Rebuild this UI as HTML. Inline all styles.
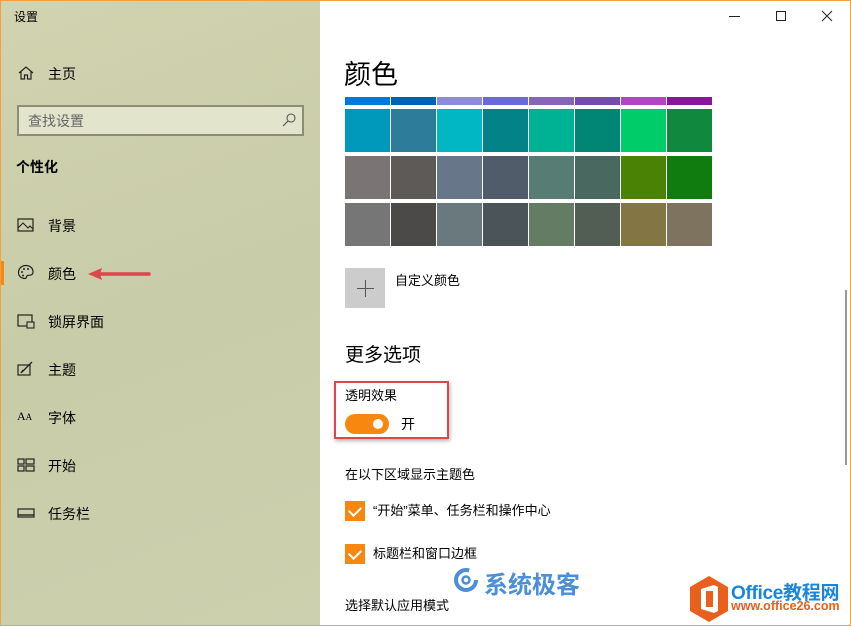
<!DOCTYPE html>
<html><head><meta charset="utf-8"><style>
*{margin:0;padding:0;box-sizing:border-box}
body{width:851px;height:626px;overflow:hidden;font-family:"Liberation Sans","Noto Sans CJK SC",sans-serif;color:#000;position:relative;background:#fff}
.win{position:absolute;left:0;top:0;width:851px;height:626px}
.bord{position:absolute;left:0;top:0;width:851px;height:626px;border:1px solid #f0a040;pointer-events:none}
.left{position:absolute;left:0;top:0;width:320px;height:626px;background:linear-gradient(160deg,#d2d3b0 0%,#c8cca8 50%,#ccd0ae 100%)}
.t{position:absolute;font-size:13px;white-space:nowrap}
.ico{position:absolute;left:17px;width:18px;height:16px}
.sw{position:absolute;width:45px}
.chk{position:absolute;left:345px;width:20px;height:20px;background:#f7870f}
.chk:after{content:"";position:absolute;left:4px;top:5px;width:10px;height:6px;border-left:2px solid #fff;border-bottom:2px solid #fff;transform:rotate(-45deg)}
</style></head><body>
<div class="win">
<div class="left">
<div class="t" style="left:14px;top:8px;font-size:12px">设置</div>
<svg class="ico" style="top:65px" viewBox="0 0 18 16"><path d="M2 8 L9 2 L16 8 M4 6.5 V14 H7.5 V10 H10.5 V14 H14 V6.5" fill="none" stroke="#222" stroke-width="1.2"/></svg>
<div class="t" style="left:48px;top:64px;font-size:14px">主页</div>
<div style="position:absolute;left:17px;top:105px;width:287px;height:31px;border:2px solid #8a8d78;background:#e2e4cc"></div>
<div class="t" style="left:28px;top:111px;font-size:14px;color:#666">查找设置</div>
<svg style="position:absolute;left:281px;top:112px" width="16" height="16" viewBox="0 0 16 16"><circle cx="10" cy="6" r="4" fill="none" stroke="#555" stroke-width="1.1"/><path d="M7 9 L2 14" stroke="#555" stroke-width="1.2"/></svg>
<div class="t" style="left:16px;top:157px;font-size:14px;font-weight:bold">个性化</div>
<svg class="ico" style="top:217px" viewBox="0 0 18 16"><rect x="1" y="2" width="15" height="12" fill="none" stroke="#222" stroke-width="1.2"/><path d="M1 11 L6 6 L11 11 L13 9 L16 12" fill="none" stroke="#222" stroke-width="1.1"/></svg>
<div class="t" style="left:48px;top:216px;font-size:14px">背景</div>
<div style="position:absolute;left:0;top:261px;width:4px;height:24px;background:#f7870f"></div>
<svg class="ico" style="top:264px" viewBox="0 0 18 16"><path d="M9 1.5 C4 1.5 1.5 5 1.5 8.5 C1.5 12 4 14.5 8 14.5 C10 14.5 9 12 10.5 11.5 C12 11 16 12 16 8 C16 4 13 1.5 9 1.5Z" fill="none" stroke="#222" stroke-width="1.2"/><circle cx="5" cy="8" r="1" fill="#222"/><circle cx="7" cy="5" r="1" fill="#222"/><circle cx="11" cy="5" r="1" fill="#222"/><circle cx="6" cy="11.5" r="1" fill="#222"/></svg>
<div class="t" style="left:48px;top:264px;font-size:14px">颜色</div>
<svg style="position:absolute;left:86px;top:266px" width="66" height="16" viewBox="0 0 66 16"><path d="M14 8 H63" stroke="#e0454d" stroke-width="3.5" stroke-linecap="round"/><path d="M2 8 L16 2 L14 8 L16 14Z" fill="#e0454d"/></svg>
<svg class="ico" style="top:313px" viewBox="0 0 18 16"><rect x="1" y="2" width="14" height="11" fill="none" stroke="#222" stroke-width="1.2"/><rect x="10" y="9" width="7" height="6" fill="#cacdab" stroke="#222" stroke-width="1.1"/></svg>
<div class="t" style="left:48px;top:312px;font-size:14px">锁屏界面</div>
<svg class="ico" style="top:361px" viewBox="0 0 18 16"><rect x="1" y="4" width="12" height="10" fill="none" stroke="#222" stroke-width="1.2"/><path d="M5 11 L15 1 M4 12 L6 9" stroke="#222" stroke-width="1.3"/></svg>
<div class="t" style="left:48px;top:360px;font-size:14px">主题</div>
<div class="t" style="left:17px;top:409px;font-size:12px;font-family:'Liberation Serif',serif">A<span style="font-size:9px">A</span></div>
<div class="t" style="left:48px;top:408px;font-size:14px">字体</div>
<svg class="ico" style="top:457px" viewBox="0 0 18 16"><rect x="1" y="2" width="6" height="5" fill="none" stroke="#222" stroke-width="1.2"/><rect x="9" y="2" width="8" height="5" fill="none" stroke="#222" stroke-width="1.2"/><rect x="1" y="9" width="6" height="5" fill="none" stroke="#222" stroke-width="1.2"/><rect x="9" y="9" width="8" height="5" fill="none" stroke="#222" stroke-width="1.2"/></svg>
<div class="t" style="left:48px;top:456px;font-size:14px">开始</div>
<svg class="ico" style="top:505px" viewBox="0 0 18 16"><rect x="1" y="4" width="16" height="8" fill="none" stroke="#222" stroke-width="1.2"/><path d="M1 10 H17" stroke="#222" stroke-width="1.4"/></svg>
<div class="t" style="left:48px;top:504px;font-size:14px">任务栏</div>
</div>

<div style="position:absolute;left:729px;top:16px;width:11px;height:1px;background:#222"></div>
<div style="position:absolute;left:776px;top:11px;width:10px;height:10px;border:1px solid #222"></div>
<svg style="position:absolute;left:821px;top:10px" width="12" height="12"><path d="M1 1 L11 11 M11 1 L1 11" stroke="#222" stroke-width="1"/></svg>
<div style="position:absolute;left:845px;top:290px;width:2px;height:175px;background:#999"></div>

<div class="t" style="left:344px;top:53px;font-size:27px">颜色</div>
<div id="grid"></div>
<div style="position:absolute;left:345px;top:268px;width:40px;height:40px;background:#ccc"></div>
<div style="position:absolute;left:357px;top:288px;width:17px;height:1px;background:#555"></div>
<div style="position:absolute;left:365px;top:280px;width:1px;height:17px;background:#555"></div>
<div class="t" style="left:395px;top:270px;font-size:13px">自定义颜色</div>
<div class="t" style="left:345px;top:340px;font-size:19px">更多选项</div>
<div style="position:absolute;left:334px;top:381px;width:115px;height:58px;border:2px solid #e0454d;box-shadow:1px 2px 4px rgba(0,0,0,.3)"></div>
<div class="t" style="left:345px;top:385px;font-size:13px">透明效果</div>
<div style="position:absolute;left:345px;top:414px;width:44px;height:20px;border-radius:10px;background:#f7870f"></div>
<div style="position:absolute;left:373px;top:419px;width:10px;height:10px;border-radius:5px;background:#fff"></div>
<div class="t" style="left:401px;top:414px;font-size:14px">开</div>
<div class="t" style="left:345px;top:464px;font-size:13px">在以下区域显示主题色</div>
<div class="chk" style="top:501px"></div>
<div class="t" style="left:373px;top:500px;font-size:13px">“开始”菜单、任务栏和操作中心</div>
<div class="chk" style="top:544px"></div>
<div class="t" style="left:373px;top:543px;font-size:13px">标题栏和窗口边框</div>
<div class="t" style="left:345px;top:595px;font-size:13px">选择默认应用模式</div>

<svg style="position:absolute;left:452px;top:567px" width="30" height="26"><circle cx="14" cy="13" r="10" fill="none" stroke="#4a8fd8" stroke-width="4" stroke-dasharray="50 13"/><circle cx="14" cy="13" r="3.5" fill="none" stroke="#4a8fd8" stroke-width="2.5"/></svg>
<div class="t" style="left:484px;top:565px;font-size:24px;font-weight:bold;color:#4a8fd8">系统极客</div>
<svg style="position:absolute;left:688px;top:575px" width="42" height="48" viewBox="0 0 42 48"><path d="M21 1 L40 12 L40 36 L21 47 L2 36 L2 12Z" fill="#e8601c"/><path d="M13 14 L26 10 L30 12 L30 36 L26 38 L13 34Z" fill="#fff"/><rect x="18" y="16" width="7" height="16" fill="#e8601c"/></svg>
<div class="t" style="left:731px;top:578px;font-size:19px;font-weight:bold;color:#1a86d8;letter-spacing:-0.3px">Office教程网</div>
<div class="t" style="left:731px;top:599px;font-size:12.5px;font-weight:bold;color:#e8601c">www.office26.com</div>
</div>
<div class="bord"></div>
<script>
var c=[["#0078d7","#0063b1","#8e8cd8","#6b69d6","#8764b8","#744da9","#b146c2","#881798"],
["#0099bc","#2d7d9a","#00b7c3","#038387","#00b294","#018574","#00cc6a","#10893e"],
["#7a7574","#5d5a58","#68768a","#515c6b","#567c73","#486860","#498205","#107c10"],
["#767676","#4c4a48","#69797e","#4a5459","#647c64","#525e54","#847545","#7e735f"]];
var tops=[97,109,156,203],hs=[8,43,43,43],h="";
for(var r=0;r<4;r++)for(var i=0;i<8;i++)h+='<div class="sw" style="left:'+(345+i*46)+'px;top:'+tops[r]+'px;height:'+hs[r]+'px;background:'+c[r][i]+'"></div>';
document.getElementById("grid").innerHTML=h;
</script>
</body></html>
